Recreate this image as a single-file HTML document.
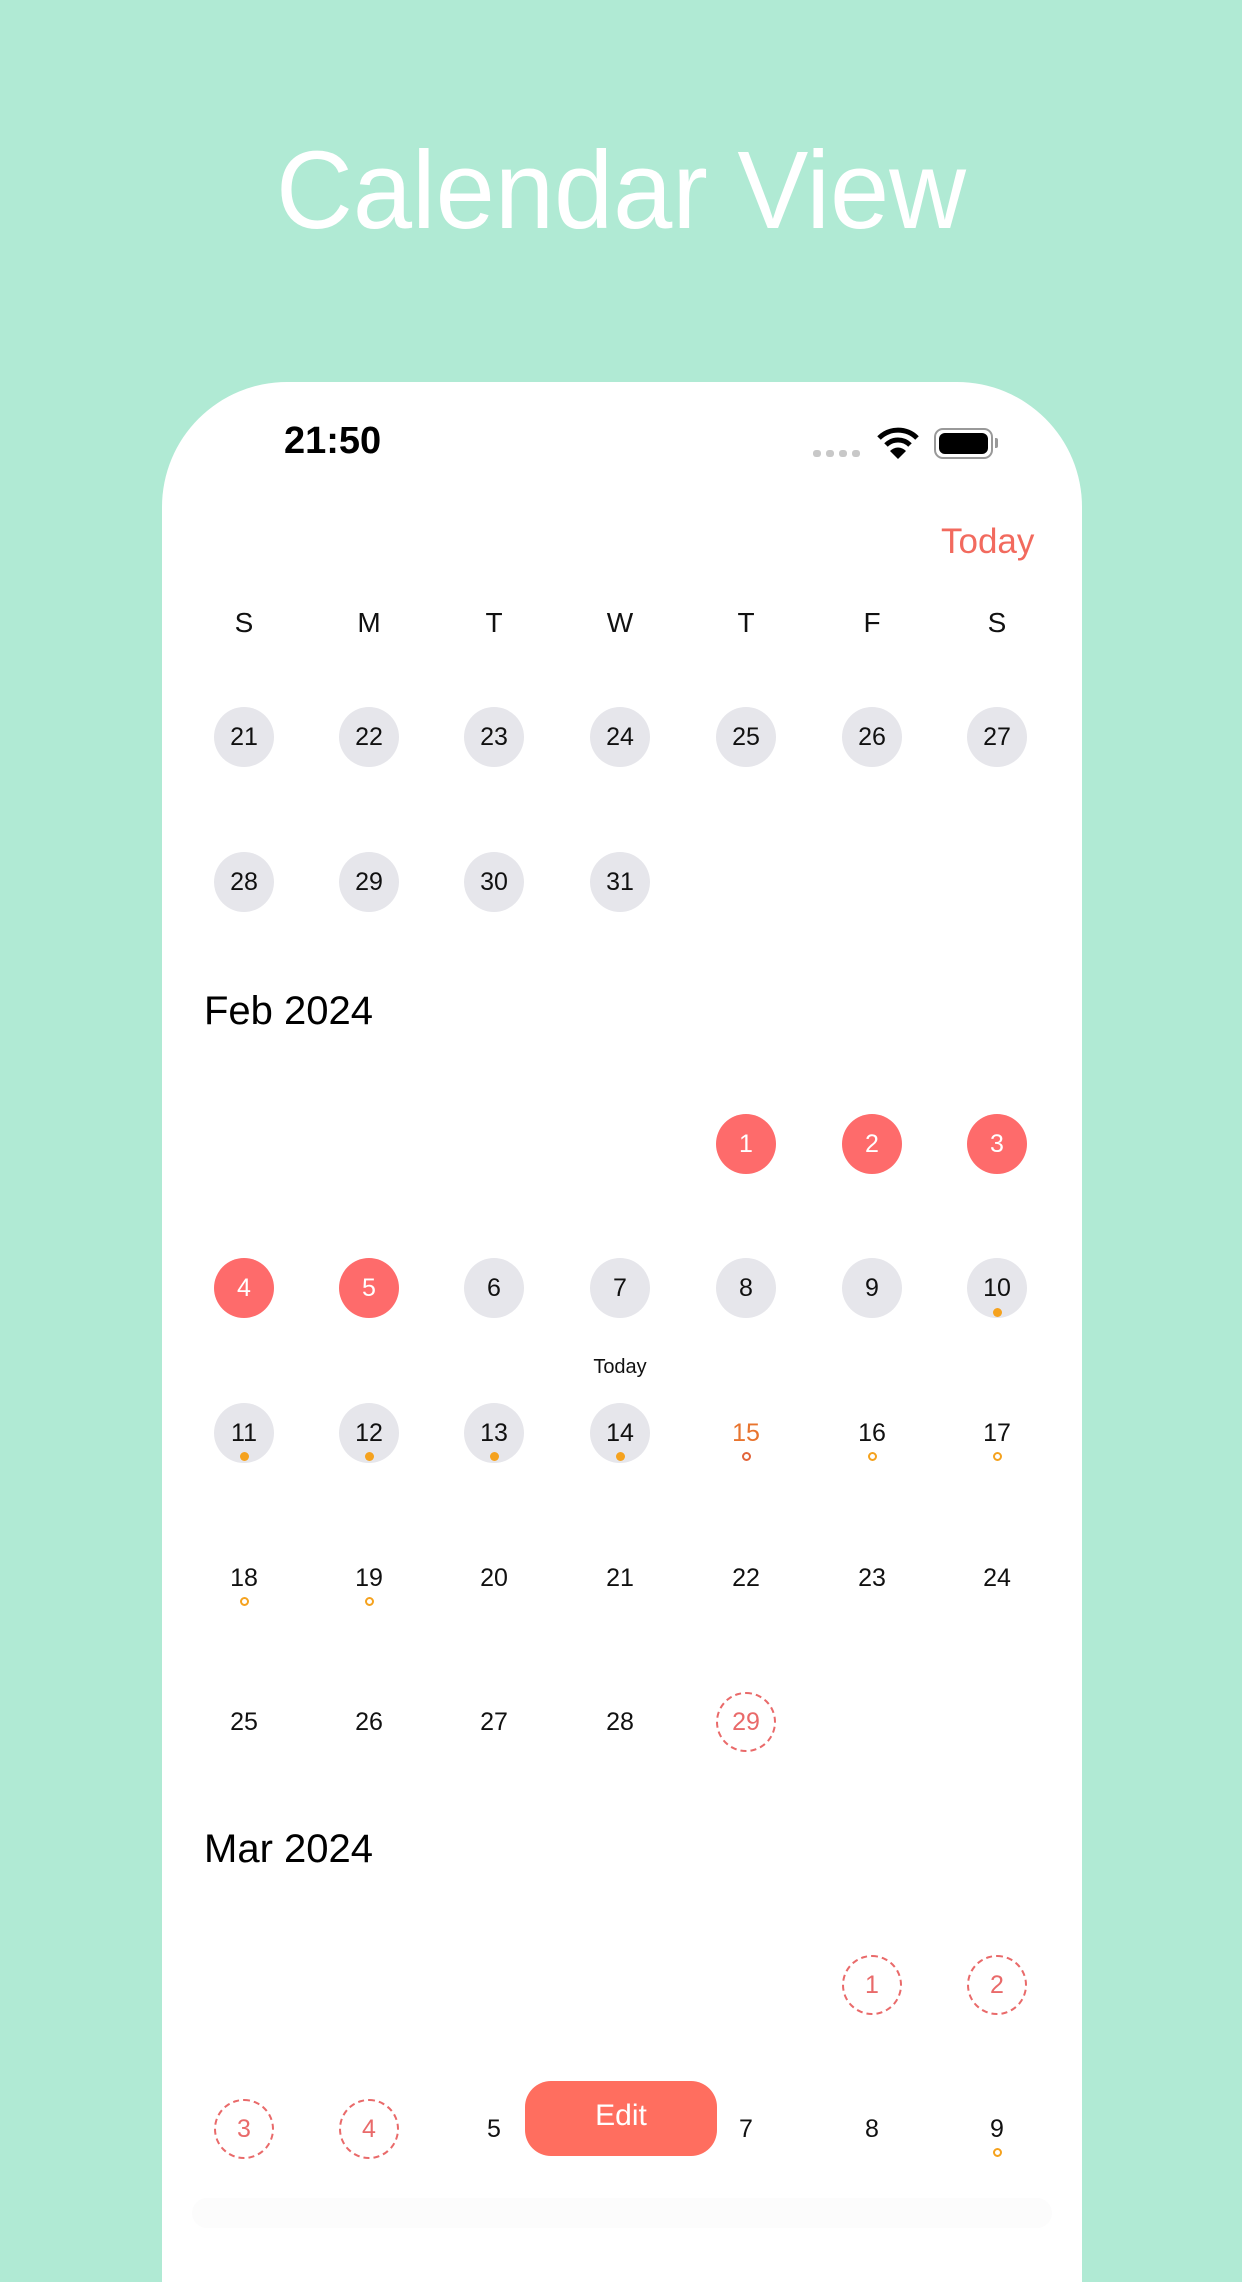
<!DOCTYPE html>
<html><head><meta charset="utf-8"><style>
*{margin:0;padding:0;box-sizing:border-box}
body{width:1242px;height:2208px;background:#b0ead4;position:relative;overflow:hidden;font-family:"Liberation Sans",sans-serif}
.card{position:absolute;left:162px;top:382px;width:920px;height:1900px;background:#fff;border-radius:125px 125px 0 0}
.t{position:absolute;white-space:nowrap}
.c{position:absolute;width:60px;height:60px;margin:-30px 0 0 -30px;border-radius:50%;display:flex;align-items:center;justify-content:center;font-size:25px;color:#111}
.g{background:#e6e6eb}
.r{background:#fe6b6b;color:#fff}
.d{border:2px dashed #e96a6a;color:#e96a6a}
.dot{position:absolute;width:9px;height:9px;margin-left:-4.5px;border-radius:50%;background:#f5a21e}
.ring{position:absolute;width:9px;height:9px;margin-left:-4.5px;border-radius:50%;border:2px solid #f5a21e}
.w{position:absolute;font-size:28px;color:#111;transform:translate(-50%,-50%)}
</style></head><body>
<svg style="position:absolute;left:0;top:0" width="1242" height="320"><text x="621" y="228" text-anchor="middle" font-family="Liberation Sans, sans-serif" font-size="110" fill="#fff" textLength="690" lengthAdjust="spacingAndGlyphs">Calendar View</text></svg>
<div class="card"></div>
<div class="t" style="left:284px;top:420px;font-size:38px;font-weight:bold;color:#000">21:50</div>
<div style="position:absolute;left:813px;top:450px;width:8px;height:7px;border-radius:3px;background:#c8c8c8"></div>
<div style="position:absolute;left:826px;top:450px;width:8px;height:7px;border-radius:3px;background:#c8c8c8"></div>
<div style="position:absolute;left:839px;top:450px;width:8px;height:7px;border-radius:3px;background:#c8c8c8"></div>
<div style="position:absolute;left:852px;top:450px;width:8px;height:7px;border-radius:3px;background:#c8c8c8"></div>
<svg style="position:absolute;left:876px;top:426px" width="44" height="34" viewBox="0 0 44 34"><path d="M3 12 A27 27 0 0 1 41 12" stroke="#000" stroke-width="5" fill="none"/><path d="M10 19 A17 17 0 0 1 34 19" stroke="#000" stroke-width="5" fill="none"/><path d="M22 33 L14 25 A11 11 0 0 1 30 25 Z" fill="#000"/></svg>
<div style="position:absolute;left:934px;top:428px;width:59px;height:31px;border:2px solid #999;border-radius:9px"></div>
<div style="position:absolute;left:939px;top:433px;width:49px;height:21px;background:#000;border-radius:6px"></div>
<div style="position:absolute;left:995px;top:438px;width:3px;height:10px;background:#999;border-radius:0 2px 2px 0"></div>
<div class="t" style="left:941px;top:522px;font-size:35px;color:#f26a5e">Today</div>
<div class="w" style="left:244px;top:623px">S</div><div class="w" style="left:369px;top:623px">M</div><div class="w" style="left:494px;top:623px">T</div><div class="w" style="left:620px;top:623px">W</div><div class="w" style="left:746px;top:623px">T</div><div class="w" style="left:872px;top:623px">F</div><div class="w" style="left:997px;top:623px">S</div>
<div class="c g" style="left:244px;top:737px">21</div><div class="c g" style="left:369px;top:737px">22</div><div class="c g" style="left:494px;top:737px">23</div><div class="c g" style="left:620px;top:737px">24</div><div class="c g" style="left:746px;top:737px">25</div><div class="c g" style="left:872px;top:737px">26</div><div class="c g" style="left:997px;top:737px">27</div>
<div class="c g" style="left:244px;top:882px">28</div><div class="c g" style="left:369px;top:882px">29</div><div class="c g" style="left:494px;top:882px">30</div><div class="c g" style="left:620px;top:882px">31</div>
<div class="t" style="left:204px;top:989px;font-size:40px;color:#000">Feb 2024</div>
<div class="c r" style="left:746px;top:1144px">1</div><div class="c r" style="left:872px;top:1144px">2</div><div class="c r" style="left:997px;top:1144px">3</div>
<div class="c r" style="left:244px;top:1288px">4</div><div class="c r" style="left:369px;top:1288px">5</div><div class="c g" style="left:494px;top:1288px">6</div><div class="c g" style="left:620px;top:1288px">7</div><div class="c g" style="left:746px;top:1288px">8</div><div class="c g" style="left:872px;top:1288px">9</div><div class="c g" style="left:997px;top:1288px">10</div>
<div class="dot" style="left:997px;top:1308px"></div>
<div class="t" style="left:620px;top:1356px;font-size:20px;color:#111;transform:translateX(-50%)">Today</div>
<div class="c g" style="left:244px;top:1433px">11</div><div class="c g" style="left:369px;top:1433px">12</div><div class="c g" style="left:494px;top:1433px">13</div><div class="c g" style="left:620px;top:1433px">14</div><div class="c" style="left:746px;top:1433px;color:#e8742e">15</div><div class="c" style="left:872px;top:1433px">16</div><div class="c" style="left:997px;top:1433px">17</div>
<div class="dot" style="left:244px;top:1452px"></div><div class="dot" style="left:369px;top:1452px"></div><div class="dot" style="left:494px;top:1452px"></div><div class="dot" style="left:620px;top:1452px"></div>
<div class="ring" style="left:746px;top:1452px;border-color:#e2643a"></div><div class="ring" style="left:872px;top:1452px"></div><div class="ring" style="left:997px;top:1452px"></div>
<div class="c" style="left:244px;top:1578px">18</div><div class="c" style="left:369px;top:1578px">19</div><div class="c" style="left:494px;top:1578px">20</div><div class="c" style="left:620px;top:1578px">21</div><div class="c" style="left:746px;top:1578px">22</div><div class="c" style="left:872px;top:1578px">23</div><div class="c" style="left:997px;top:1578px">24</div>
<div class="ring" style="left:244px;top:1597px"></div><div class="ring" style="left:369px;top:1597px"></div>
<div class="c" style="left:244px;top:1722px">25</div><div class="c" style="left:369px;top:1722px">26</div><div class="c" style="left:494px;top:1722px">27</div><div class="c" style="left:620px;top:1722px">28</div><div class="c d" style="left:746px;top:1722px">29</div>
<div class="t" style="left:204px;top:1827px;font-size:40px;color:#000">Mar 2024</div>
<div class="c d" style="left:872px;top:1985px">1</div><div class="c d" style="left:997px;top:1985px">2</div>
<div class="c d" style="left:244px;top:2129px">3</div><div class="c d" style="left:369px;top:2129px">4</div><div class="c" style="left:494px;top:2129px">5</div><div class="c" style="left:746px;top:2129px">7</div><div class="c" style="left:872px;top:2129px">8</div><div class="c" style="left:997px;top:2129px">9</div>
<div class="ring" style="left:997px;top:2148px"></div>
<div style="position:absolute;left:525px;top:2081px;width:192px;height:75px;background:#ff6e5f;border-radius:26px;color:#fff;font-size:30px;display:flex;align-items:center;justify-content:center;padding-bottom:6px">Edit</div>
<div style="position:absolute;left:192px;top:2198px;width:860px;height:30px;background:#fcfcfc;border-radius:22px"></div>
</body></html>
